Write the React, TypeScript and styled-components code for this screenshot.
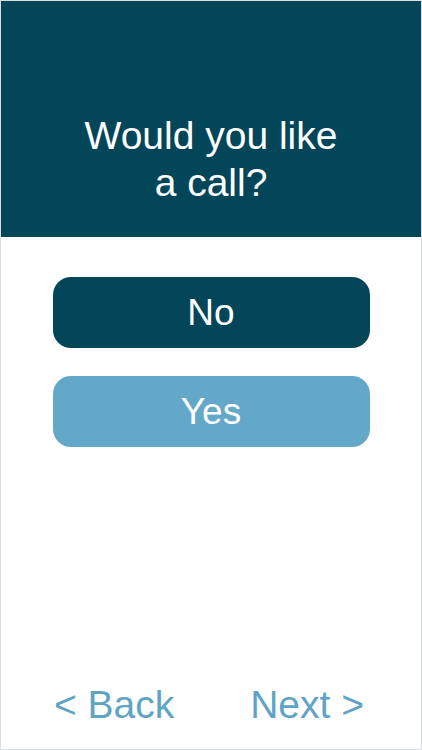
import React, { FC } from 'react';
import styled, { createGlobalStyle } from 'styled-components';

const GlobalStyle = createGlobalStyle`
    html, body {
        margin: 0;
        padding: 0;
        background: #ffffff;
    }
    * {
        box-sizing: border-box;
    }
`;

const Screen = styled.div`
    width: 422px;
    height: 750px;
    border: 1px solid #dcdfe1;
    display: flex;
    flex-direction: column;
    background: #ffffff;
    font-family: "Liberation Sans", Arial, sans-serif;
`;

const Header = styled.header`
    height: 236px;
    background: #03465a;
    padding-top: 111px;
    text-align: center;
`;

const Title = styled.h1`
    margin: 0;
    color: #ffffff;
    font-weight: 400;
    font-size: 39px;
    line-height: 47px;
`;

const Choices = styled.div`
    display: flex;
    flex-direction: column;
    align-items: center;
    gap: 28px;
    padding-top: 40px;
`;

const Choice = styled.button<{ $tone: 'dark' | 'light' }>`
    width: 317px;
    height: 71px;
    border: none;
    border-radius: 18px;
    background: ${p => (p.$tone === 'dark' ? '#03465a' : '#63a8c8')};
    color: #ffffff;
    font-family: inherit;
    font-size: 37px;
    font-weight: 400;
    cursor: pointer;
`;

const Footer = styled.nav`
    margin-top: auto;
    display: flex;
    justify-content: space-between;
    padding: 0 57px 21px 53px;
`;

const NavLink = styled.a`
    color: #5fa4c5;
    font-size: 39px;
    line-height: 46px;
    text-decoration: none;
    cursor: pointer;
`;

const App: FC = () => {
    return (
        <>
            <GlobalStyle />
            <Screen>
                <Header>
                    <Title>
                        Would you like
                        <br />
                        a call?
                    </Title>
                </Header>
                <Choices>
                    <Choice $tone="dark">No</Choice>
                    <Choice $tone="light">Yes</Choice>
                </Choices>
                <Footer>
                    <NavLink>&lt; Back</NavLink>
                    <NavLink>Next &gt;</NavLink>
                </Footer>
            </Screen>
        </>
    );
};

export default App;
